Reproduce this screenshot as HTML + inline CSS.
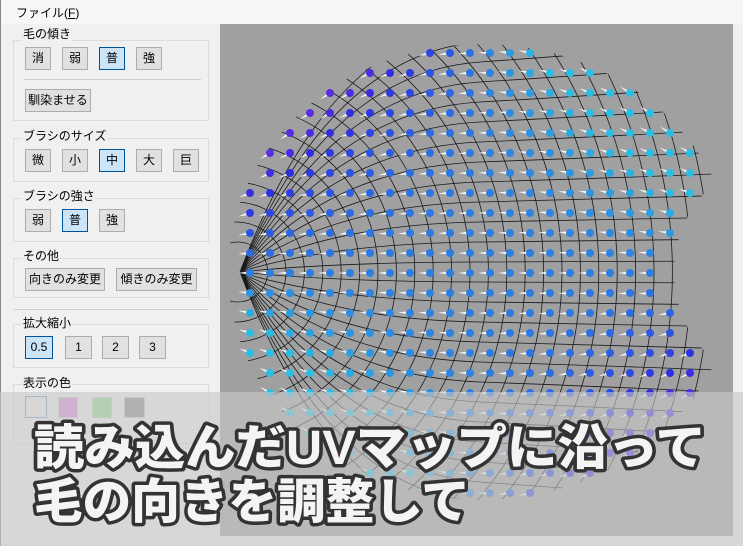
<!DOCTYPE html>
<html><head><meta charset="utf-8">
<style>
*{box-sizing:border-box;margin:0;padding:0}
html,body{width:743px;height:546px;overflow:hidden}
body{background:#f0f0f0;position:relative;font-family:"Liberation Sans","Noto Sans CJK JP",sans-serif;font-size:12px;color:#000}
.menu{position:absolute;left:0;top:0;width:743px;height:24px;background:#f7f7f7}
.menu span{position:absolute;left:16px;top:4px}
.grp{position:absolute;border:1px solid #dcdcdc}
.t{position:absolute;background:#f0f0f0;padding:0 1px;line-height:14px}
.b{position:absolute;height:23px;border:1px solid #adadad;background:#e1e1e1;text-align:center;line-height:21px;font-size:12px}
.s{background:#cce4f7;border-color:#005499}
.sep{position:absolute;height:1px;background:#d0d0d0}
#cv{position:absolute;left:220px;top:24px;display:block}
.ov{position:absolute;left:0;top:392px;width:743px;height:154px;background:rgba(200,200,200,0.62)}
</style></head><body>
<div class="menu"><span>ファイル(<u>F</u>)</span></div>
<div style="position:absolute;left:0;top:0;width:1px;height:546px;background:#888"></div>

<div class="grp" style="left:13px;top:40px;width:196px;height:81px"></div>
<div class="t" style="left:22px;top:27px">毛の傾き</div>
<div class="b" style="left:25px;top:47px;width:26px">消</div>
<div class="b" style="left:62px;top:47px;width:26px">弱</div>
<div class="b s" style="left:99px;top:47px;width:26px">普</div>
<div class="b" style="left:136px;top:47px;width:26px">強</div>
<div class="sep" style="left:24px;top:79px;width:177px"></div>
<div class="b" style="left:25px;top:89px;width:66px">馴染ませる</div>

<div class="grp" style="left:13px;top:138px;width:196px;height:44px"></div>
<div class="t" style="left:22px;top:129px">ブラシのサイズ</div>
<div class="b" style="left:25px;top:149px;width:26px">微</div>
<div class="b" style="left:62px;top:149px;width:26px">小</div>
<div class="b s" style="left:99px;top:149px;width:26px">中</div>
<div class="b" style="left:136px;top:149px;width:26px">大</div>
<div class="b" style="left:173px;top:149px;width:26px">巨</div>

<div class="grp" style="left:13px;top:198px;width:196px;height:44px"></div>
<div class="t" style="left:22px;top:189px">ブラシの強さ</div>
<div class="b" style="left:25px;top:209px;width:26px">弱</div>
<div class="b s" style="left:62px;top:209px;width:26px">普</div>
<div class="b" style="left:99px;top:209px;width:26px">強</div>

<div class="grp" style="left:13px;top:258px;width:196px;height:40px"></div>
<div class="t" style="left:22px;top:249px">その他</div>
<div class="b" style="left:25px;top:268px;width:80px">向きのみ変更</div>
<div class="b" style="left:116px;top:268px;width:81px">傾きのみ変更</div>
<div class="sep" style="left:14px;top:309px;width:194px"></div>

<div class="grp" style="left:13px;top:324px;width:196px;height:44px"></div>
<div class="t" style="left:22px;top:316px">拡大縮小</div>
<div class="b s" style="left:25px;top:336px;width:28px">0.5</div>
<div class="b" style="left:65px;top:336px;width:27px">1</div>
<div class="b" style="left:102px;top:336px;width:27px">2</div>
<div class="b" style="left:139px;top:336px;width:27px">3</div>

<div class="grp" style="left:13px;top:384px;width:196px;height:60px"></div>
<div class="t" style="left:22px;top:376px">表示の色</div>
<div style="position:absolute;left:25px;top:396px;width:22px;height:22px;border:1px solid #7a98b8;background:#eef0f2"></div>
<div style="position:absolute;left:58px;top:397px;width:20px;height:21px;border:1px solid #ccc;background:#dd88dd"></div>
<div style="position:absolute;left:92px;top:397px;width:20px;height:21px;border:1px solid #ccc;background:#90dc90"></div>
<div style="position:absolute;left:124px;top:397px;width:21px;height:21px;border:1px solid #ccc;background:#8c8c8c"></div>

<svg id="cv" width="513" height="512" viewBox="220 24 513 512"><defs><mask id="m" maskUnits="userSpaceOnUse" x="220" y="24" width="513" height="512"><rect x="220" y="24" width="513" height="512" fill="#000"/><ellipse cx="482" cy="272" rx="254" ry="228" fill="#fff"/><circle cx="792" cy="272" r="118" fill="#000"/></mask></defs><rect x="220" y="24" width="513" height="512" fill="#a0a0a0"/><g id="gl" mask="url(#m)"></g><g id="g"></g></svg>
<div style="position:absolute;left:733px;top:24px;width:10px;height:512px;background:#f0f0f0"></div>

<div class="ov"></div>
<svg style="position:absolute;left:0;top:392px;display:block" width="743" height="154">
<g font-family="'Liberation Sans','Noto Sans CJK JP',sans-serif" font-weight="900" font-size="48" fill="#f4f4f4" stroke="#333" stroke-width="7" stroke-linejoin="round" paint-order="stroke">
<text x="34" y="72" textLength="672" lengthAdjust="spacingAndGlyphs">読み込んだUVマップに沿って</text>
<text x="34" y="126" textLength="436" lengthAdjust="spacingAndGlyphs">毛の向きを調整して</text>
</g></svg>

<script>
var g=document.getElementById('g'),gl=document.getElementById('gl'),s='';
function inside(x,y){var nx=(x-482)/252,ny=(y-272)/226;if(nx*nx+ny*ny>1)return false;var dx=x-792,dy=y-272;if(dx*dx+dy*dy<125*125)return false;return true;}
var L='';
for(var r=30;r<=520;r+=20){L+='<circle cx="'+(240-r*0.08)+'" cy="272" r="'+r+'" />';}
var R='';
for(var d=-250;d<=250;d+=20){R+='M240 272Q330 '+(272+d*0.95)+' 480 '+(272+d)+'T740 '+(272+d*1.1);}
gl.innerHTML='<g stroke="#1a1a1a" stroke-width="0.8" fill="none">'+L+'<path d="'+R+'"/></g>';
for(var y=53;y<=500;y+=20)for(var x=230;x<=720;x+=20){
 if(!inside(x,y))continue;
 var nx=(x-482)/252,ny=(272-y)/226;
 var k=nx*ny*(0.4+nx*nx+ny*ny);
 var h=213-70*k;if(h<192)h=192;if(h>255)h=255;
 var ang=-1.2*nx*ny;var Ln=12;
 var tx=x-Ln*Math.cos(ang),ty=y+Ln*Math.sin(ang);
 s+='<path d="M'+x+' '+(y-1.8)+'L'+tx.toFixed(1)+' '+ty.toFixed(1)+'L'+x+' '+(y+1.8)+'Z" fill="#fff" opacity="0.9"/>';
 s+='<circle cx="'+x+'" cy="'+y+'" r="4" fill="hsl('+h.toFixed(0)+',75%,53%)"/>';
}
g.innerHTML=s;
</script>
</body></html>
